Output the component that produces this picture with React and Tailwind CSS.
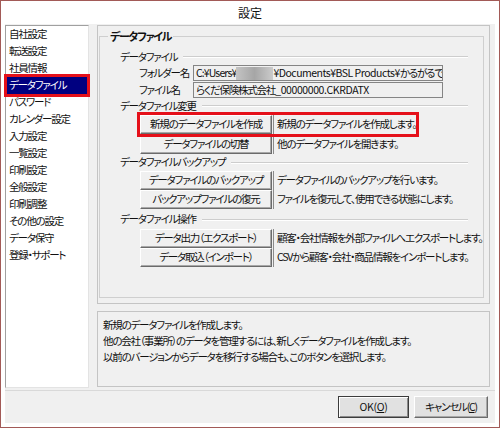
import React from 'react';

const ui = "font-['MS_UI_Gothic','Noto_Sans_CJK_JP',sans-serif] [font-feature-settings:'palt'] text-[10.5px] tracking-[-1.2px] leading-none text-[#111]";

const menuItems = [
  '自社設定',
  '転送設定',
  '社員情報',
  'データファイル',
  'パスワード',
  'カレンダー設定',
  '入力設定',
  '一覧設定',
  '印刷設定',
  '全般設定',
  '印刷調整',
  'その他の設定',
  'データ保守',
  '登録・サポート',
];

const Section = ({ title, className = '' }) => (
  <div className={`flex items-center h-[16px] pr-[15px] ${className}`}>
    <span>{title}</span>
    <div className="flex-1 ml-[6px] border-t border-[#cdcdcd] h-[2px] border-b border-b-white" />
  </div>
);

const ActionRow = ({ label, desc, highlight, className = '' }) => (
  <div className={`flex items-stretch h-[19px] w-[276px] ml-[20px] ${highlight ? 'outline-3 outline-[#e5101a]' : ''} ${className}`}>
    <button className="w-[132px] h-full shrink-0 bg-[#f0f0f0] border border-t-white border-l-white border-r-[#6b6b6b] border-b-[#6b6b6b] shadow-[inset_-1px_-1px_0_#a8a8a8] flex items-center justify-center whitespace-nowrap">
      {label}
    </button>
    <div className="flex items-center pl-[3px] ml-[1px] border-l border-[#8a8a8a] whitespace-nowrap">{desc}</div>
  </div>
);

export default function App() {
  return (
    <div className={`w-[500px] h-[428px] bg-white border border-[#a25a57] flex flex-col ${ui}`}>
      {/* title bar */}
      <div className="h-[23px] flex items-center justify-center text-[12px] tracking-normal">設定</div>

      {/* client area */}
      <div className="flex-1 mx-[4px] mb-[4px] bg-[#f0f0f0] flex flex-col">
        <div className="flex pt-[1px] h-[364px]">
          {/* side menu */}
          <div className="w-[84px] h-[363px] bg-white border border-t-[#a0a0a0] border-l-[#a0a0a0] border-r-[#e3e3e3] border-b-[#e3e3e3] px-[1px]">
            {menuItems.map((item) => (
              <div
                key={item}
                className={`h-[17px] flex items-center pl-[2px] whitespace-nowrap ${
                  item === 'データファイル' ? 'bg-[#000080] text-white outline-3 outline-[#e5101a]' : ''
                }`}
              >
                {item}
              </div>
            ))}
          </div>

          {/* right column */}
          <div className="ml-[8px] mr-[5px] flex-1 flex flex-col">
            <div className="h-[279px] border border-[#c4c4c4] pl-[1px] pr-[5px] pt-[3px] pb-[5px] flex">
              <fieldset className="flex-1 border border-[#cfcfcf] pb-[4px]">
                <legend className="ml-[8px] px-[2px] font-bold text-[11px] tracking-[-1.3px] leading-[14px]">データファイル</legend>

                <div className="pl-[20px]">
                  <Section title="データファイル" className="mt-[6px]" />
                  <div className="flex items-center h-[16px]">
                    <span className="w-[73px] pl-[19px]">フォルダー名</span>
                    <div className="w-[250px] h-[16px] border border-[#858585] bg-[#f0f0f0] flex items-center px-[2px] overflow-hidden whitespace-nowrap">
                      <span className="shrink-0 tracking-[-0.9px]">C:¥Users¥</span>
                      <span className="inline-block w-[37px] h-[13px] bg-gradient-to-r from-[#c4c4c4] via-[#a6a6a6] to-[#cbcbcb] shrink-0" />
                      <span className="shrink-0 tracking-[-0.5px]">¥Documents¥BSL Products¥</span>
                      <span className="shrink-0">かるがるできる顧客</span>
                    </div>
                  </div>
                  <div className="flex items-center h-[16px] mt-[1px]">
                    <span className="w-[73px] pl-[19px]">ファイル名</span>
                    <div className="w-[250px] h-[16px] border border-[#858585] bg-[#f0f0f0] flex items-center px-[2px] whitespace-nowrap">
                      らくだ保険株式会社<span className="tracking-[-0.4px]">_00000000.CKRDATX</span>
                    </div>
                  </div>

                  <Section title="データファイル変更" />
                  <ActionRow
                    className="mt-[1px]"
                    label="新規のデータファイルを作成"
                    desc="新規のデータファイルを作成します。"
                    highlight
                  />
                  <ActionRow className="mt-[1px]" label="データファイルの切替" desc="他のデータファイルを開きます。" />

                  <Section title="データファイルバックアップ" className="h-[17px]" />
                  <ActionRow label="データファイルのバックアップ" desc="データファイルのバックアップを行います。" />
                  <ActionRow label="バックアップファイルの復元" desc="ファイルを復元して、使用できる状態にします。" />

                  <Section title="データファイル操作" className="mt-[2px] h-[17px]" />
                  <ActionRow
                    className="mt-[1px]"
                    label="データ出力（エクスポート）"
                    desc="顧客・会社情報を外部ファイルへエクスポートします。"
                  />
                  <ActionRow label="データ取込（インポート）" desc="CSVから顧客・会社・商品情報をインポートします。" />
                </div>
              </fieldset>
            </div>

            {/* help box */}
            <div className="mt-[7px] h-[76px] border border-[#c4c4c4] pl-[5px] pt-[7px] flex flex-col gap-[4px] leading-[12px] whitespace-nowrap">
              <p>新規のデータファイルを作成します。</p>
              <p>他の会社（事業所）のデータを管理するには、新しくデータファイルを作成します。</p>
              <p>以前のバージョンからデータを移行する場合も、このボタンを選択します。</p>
            </div>
          </div>
        </div>

        {/* footer */}
        <div className="mt-[2px] border-t border-[#d9d9d9] flex-1 flex justify-end items-start pt-[5px] pr-[7px] gap-[5px]">
          <button className="w-[71px] h-[22px] bg-[#e1e1e1] border border-[#3c3c3c] shadow-[inset_1px_1px_0_#fff,inset_-1px_-1px_0_#8a8a8a] flex items-center justify-center tracking-[-0.3px]">
            OK(<span className="underline">O</span>)
          </button>
          <button className="w-[74px] h-[22px] bg-[#e1e1e1] border border-t-white border-l-white border-r-[#6b6b6b] border-b-[#6b6b6b] shadow-[inset_-1px_-1px_0_#a8a8a8] flex items-center justify-center">
            キャンセル(<span className="underline">C</span>)
          </button>
        </div>
      </div>
    </div>
  );
}
